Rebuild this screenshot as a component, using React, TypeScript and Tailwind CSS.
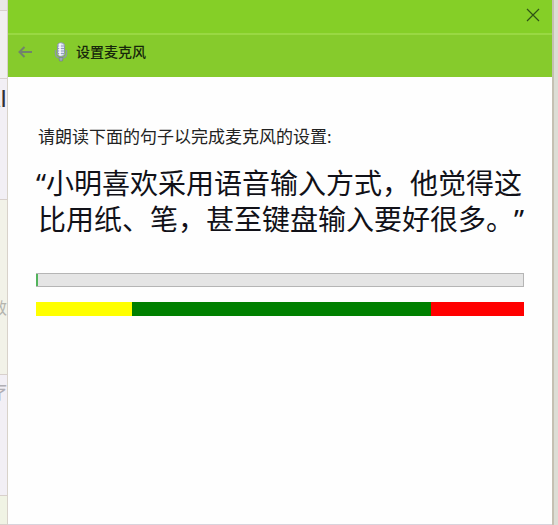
import React from "react";

const bands = [
  { height: "h-[11px]", tone: "bg-[#e9e8e6]", text: "", look: "" },
  { height: "h-[68px]", tone: "bg-[#f1eff0]", text: "", look: "" },
  { height: "h-[121px]", tone: "bg-[#f2eff5]", text: "AI", look: "pt-1.5 font-['Liberation_Sans',sans-serif] text-2xl leading-7 text-[#303038]" },
  { height: "h-[175px]", tone: "bg-[#f2f2e8]", text: "效", look: "pt-24 text-base leading-6 text-[#b4b4ae]" },
  { height: "h-[121px]", tone: "bg-[#f2eff5]", text: "疗", look: "pt-1 text-xl leading-7 text-[#b0aeb4]" },
  { height: "flex-1", tone: "bg-[#f0f3e4]", text: "", look: "" },
];

function Backdrop() {
  return (
    <div className="flex w-2 shrink-0 flex-col overflow-hidden border-r border-[#d8d2ca]">
      {bands.map((band, i) => (
        <div
          key={i}
          className={`flex shrink-0 justify-end overflow-hidden border-b border-[#d8d0cc] ${band.height} ${band.tone} ${band.look}`}
        >
          <span className="shrink-0">{band.text}</span>
        </div>
      ))}
    </div>
  );
}

function MicIcon() {
  return (
    <svg width="14" height="20" viewBox="0 0 14 20" fill="none" aria-hidden="true">
      <path d="M1.5 8v3.5c0 3 2.2 4.5 5.5 4.5s5.500-1.500 5.500-4.500V8" stroke="#8d99a0" strokeWidth="1.500" />
      <path d="M5 15.500h4l-.5 3.500h-3z" fill="#9aa3b8" stroke="#6f7c86" strokeWidth=".6" />
      <rect x="3.500" y=".8" width="7" height="13.500" rx="3" fill="#dfe4f5" stroke="#8b95a8" />
      <path d="M4 4h6M4 6.500h6M4 9h6M4 11.500h6" stroke="#929dbb" />
      <path d="M6 1.500v12" stroke="#fff" strokeWidth="1.500" />
    </svg>
  );
}

export default function App() {
  return (
    <div className="flex h-screen overflow-hidden bg-[#dcdbd5] font-['Noto_Sans','Noto_Sans_CJK_SC',sans-serif] [text-spacing-trim:space-all]">
      <Backdrop />
      <main className="flex min-w-0 flex-1 flex-col border-b border-[#d9d3dc] bg-[#fefefe]">
        <div className="flex h-[33px] shrink-0 items-center justify-end bg-[#85cf27] pr-2.5 pb-1">
          <button aria-label="关闭" className="p-0.5 text-[#2f5315]">
            <svg width="14" height="14" viewBox="0 0 14 14" stroke="currentColor" strokeWidth="1.2" className="block">
              <path d="M1 1l12 12M13 1L1 13" />
            </svg>
          </button>
        </div>
        <header className="flex h-11 shrink-0 items-center border-t-2 border-[#99d843] bg-[#86cb2c] pb-2 pl-2">
          <button aria-label="返回" className="p-0.5 text-[#71836b]">
            <svg width="14" height="12" viewBox="0 0 14 12" fill="none" stroke="currentColor" strokeWidth="2" className="block">
              <path d="M14 6H1.500M6.500 1l-5 5 5 5" />
            </svg>
          </button>
          <span className="ml-5"><MicIcon /></span>
          <h1 className="ml-2 text-sm leading-5 font-medium text-[#17280b]">设置麦克风</h1>
        </header>
        <section className="px-7 pt-12">
          <p className="pl-0.5 text-[17px] leading-6 text-[#222]">请朗读下面的句子以完成麦克风的设置:</p>
          <p className="mt-4 text-[28px] leading-9 whitespace-nowrap text-[#111118]">
            “小明喜欢采用语音输入方式，他觉得这
            <br />
            <span className="pl-0.5">比用纸、笔，甚至键盘输入要好很多。”</span>
          </p>
          <div
            role="progressbar"
            aria-label="朗读进度"
            aria-valuenow={0}
            className="mt-9 h-3.5 border border-[#b5b5b5] bg-[#e5e5e5]"
          >
            <div className="-ml-px h-full w-0.5 bg-[#52b45c]" />
          </div>
          <div role="img" aria-label="音量范围" className="mt-[15px] flex h-3.5">
            <div className="w-24 bg-[#ffff00]" />
            <div className="flex-1 bg-[#008000]" />
            <div className="w-[93px] bg-[#ff0000]" />
          </div>
        </section>
      </main>
      <div className="w-1.5 shrink-0 border-l-2 border-[#c5c0b2] bg-[#dcddd5]" />
    </div>
  );
}
